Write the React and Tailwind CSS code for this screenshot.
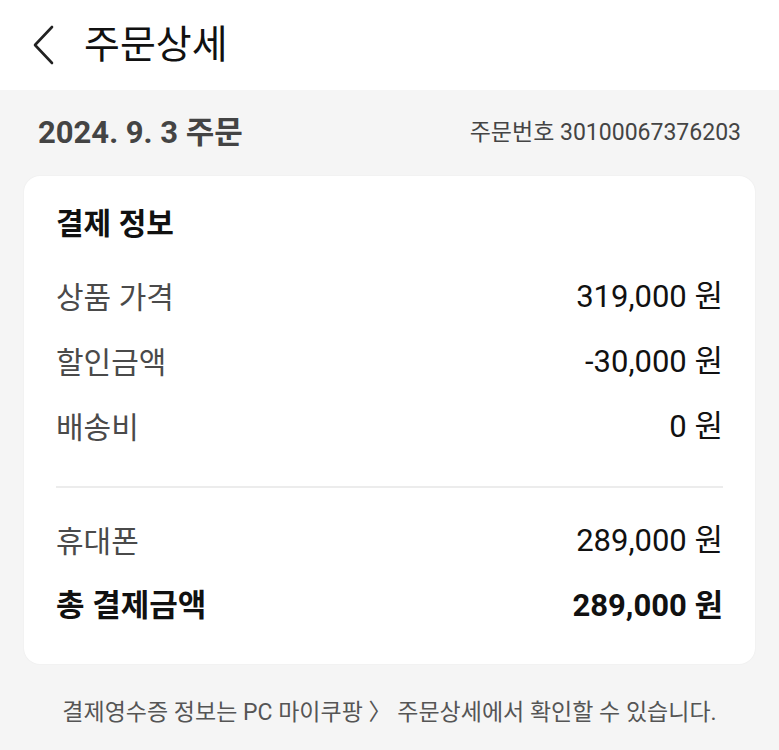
export default function App() {
  const font = { fontFamily: 'Roboto, "Noto Sans CJK KR", sans-serif' };
  const Row = ({ label, value, bold }) => (
    <div className="flex h-[65px] items-center justify-between">
      <span className={bold ? "text-[31px] font-bold text-[#111]" : "text-[30px] text-[#4a4a4a]"}>{label}</span>
      <span className={bold ? "text-[31px] font-bold text-[#111]" : "text-[31px] text-[#111]"}>{value}</span>
    </div>
  );
  return (
    <div className="min-h-[750px] w-[779px] bg-[#f5f5f5]" style={font}>
      <div className="flex h-[90px] items-center bg-white">
        <svg className="ml-[32px]" width="24" height="40" viewBox="0 0 24 40" fill="none">
          <path d="M20 2 L3 20 L20 38" stroke="#222" strokeWidth="2.6" strokeLinecap="round" strokeLinejoin="round" />
        </svg>
        <span className="ml-[28px] text-[39px] text-[#111]">주문상세</span>
      </div>
      <div className="flex h-[86px] items-center justify-between px-[38px]">
        <span className="text-[31px] font-bold text-[#444]">2024. 9. 3 주문</span>
        <span className="text-[23px] text-[#444]">주문번호 30100067376203</span>
      </div>
      <div className="mx-[24px] rounded-[16px] bg-white px-[32px] pb-[25px] pt-[22px] shadow-[0_0_2px_rgba(0,0,0,0.06)]">
        <div className="flex h-[50px] items-center text-[30px] font-bold text-[#111]">결제 정보</div>
        <div className="mt-[17px]">
          <Row label="상품 가격" value="319,000 원" />
          <Row label="할인금액" value="-30,000 원" />
          <Row label="배송비" value="0 원" />
        </div>
        <div className="mt-[26px] h-[2px] bg-[#ececec]" />
        <div className="mt-[21px]">
          <Row label="휴대폰" value="289,000 원" />
          <Row label="총 결제금액" value="289,000 원" bold />
        </div>
      </div>
      <div className="mt-[34px] flex h-[30px] items-center justify-center text-[23px] text-[#555]">
        결제영수증 정보는 PC 마이쿠팡 〉 주문상세에서 확인할 수 있습니다.
      </div>
    </div>
  );
}
